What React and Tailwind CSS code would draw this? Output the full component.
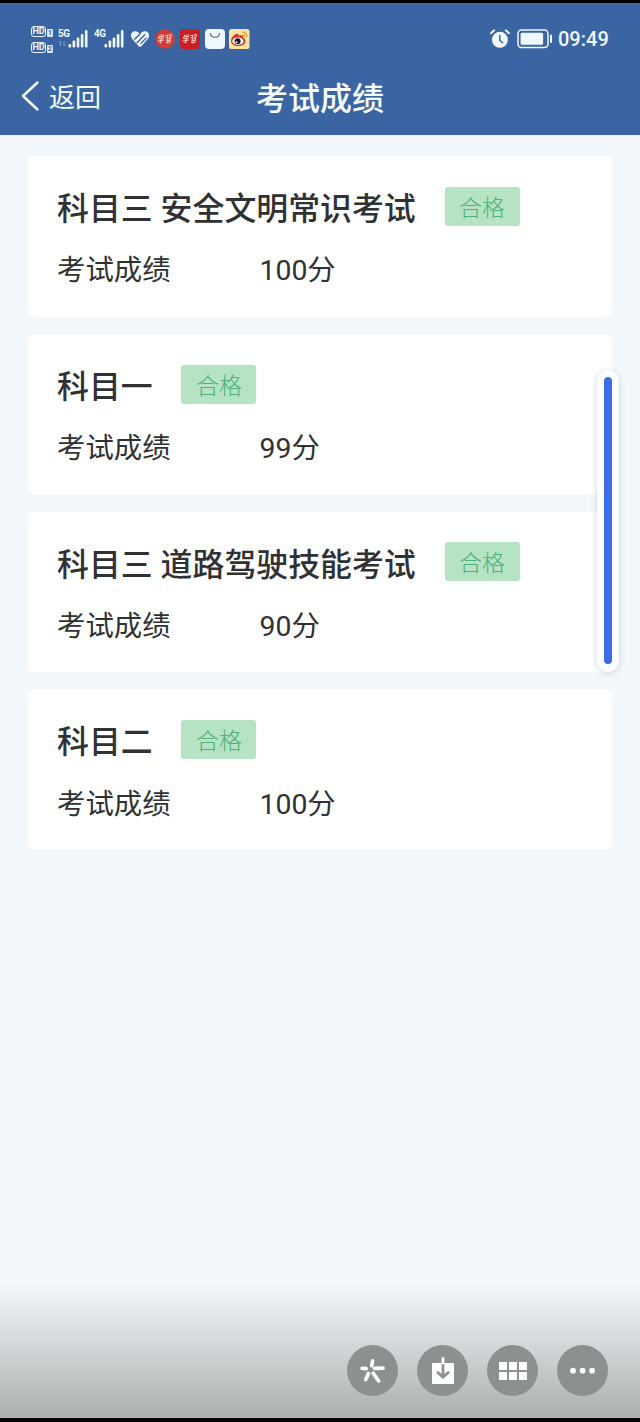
import React from "react";

const results = [
  { subject: "科目三 安全文明常识考试", score: "100分" },
  { subject: "科目一", score: "99分" },
  { subject: "科目三 道路驾驶技能考试", score: "90分" },
  { subject: "科目二", score: "100分" },
];

function HdIcon({ n }) {
  return (
    <div className="flex h-[12px] items-end gap-[1px]">
      <div className="flex h-[11px] w-[15px] shrink-0 items-center justify-center rounded-[3px] border border-[#e9f4ff] text-[9px] font-bold leading-none text-[#f0f8ff]">
        HD
      </div>
      <div className="flex h-[8px] w-[6px] shrink-0 items-center justify-center rounded-[1px] bg-[#dceaff] text-[7px] font-bold leading-none text-[#3b65a2]">
        {n}
      </div>
    </div>
  );
}

function Signal({ label, data }) {
  return (
    <div className="relative h-[20px] w-[31px]">
      <span className="absolute left-0 top-0 origin-left scale-x-90 text-[11px] font-bold leading-[10px] tracking-[-0.5px]">{label}</span>
      <svg className="absolute inset-0" width="31" height="20" fill="#f0f8ff">
        {data && <path d="M2.500 12v5M1 13.500l1.500-1.500M6 12v5M7.500 15.500L6 17" stroke="#7d9fd2" fill="none" />}
        <rect x="10.500" y="15" width="2.600" height="3.500" rx="1" />
        <rect x="14.600" y="11.500" width="2.600" height="7" rx="1" />
        <rect x="18.700" y="8.500" width="2.600" height="10" rx="1" />
        <rect x="22.800" y="5" width="2.600" height="13.500" rx="1" />
        <rect x="26.900" y="1" width="2.600" height="17.500" rx="1" />
      </svg>
    </div>
  );
}

function StudyIcon({ round }) {
  return (
    <svg width="20" height="20" viewBox="0 0 20 20">
      {round ? <circle cx="10" cy="10" r="9.800" fill="#cf3d36" /> : <rect width="20" height="20" rx="4" fill="#c91f20" />}
      <g fill="none" stroke="#ffe0dc" strokeWidth="0.900" strokeLinecap="round" strokeLinejoin="round">
        <path d="M4.200 6.500l.7 1.200M6 5.700v1.600M8.600 5.500L7.500 7.200M3.300 9.400l.4-1.300 5-.8-.6 1.200M4.500 9.800l3-.6-1.600 1.600v3.200l-1.100-.5M3 12l5.600-1" />
        <path d="M10.700 6.600l2.200-.4-.6 3-1.400-.5M14 6l2.500-.5-.8 3-1.500-.5M12.700 10l2.800-.5-.8 4-2.500.4zM12.500 11.800l2.300-.3" />
      </g>
    </svg>
  );
}

function StatusBar() {
  return (
    <div className="flex h-[57px] pt-[19px] font-['Roboto','Noto_Sans_CJK_SC',sans-serif] text-[#f0f8ff]">
      <div className="ml-[31px] flex w-[27px] flex-col gap-[4px] pt-[3px]">
        <HdIcon n="1" />
        <HdIcon n="2" />
      </div>
      <div className="flex pt-[7px]">
        <Signal label="5G" data />
        <div className="w-[5px]" />
        <Signal label="4G" />
      </div>
      <div className="ml-[5px] flex gap-[5px] pt-[7px]">
        <svg width="20" height="20" viewBox="0 0 20 20" fill="none" strokeLinecap="round">
          <path d="M10 5.300C7.800 1.700 3.700 1.500 1.700 4.100c-1.500 2.200-.7 4.600 1 6.300l6 6.800q1.300 1.300 2.600 0l6-6.800c1.700-1.700 2.500-4.100 1-6.300-2-2.600-6.100-2.400-8.300 1.200z" fill="#f0f8ff" />
          <path d="M9.900 5L4.600 10.300M14.800 5.700L7 13.800" stroke="#3b65a2" strokeWidth="1.400" />
          <path d="M16.200 9L11 14.300" stroke="#3b65a2" strokeWidth="1.200" />
        </svg>
        <StudyIcon round />
        <StudyIcon />
        <svg width="20" height="20" viewBox="0 0 20 20">
          <rect width="20" height="20" rx="4" fill="#f0f8ff" />
          <path d="M5.500 4.500c.4 5 8.600 5 9 0" fill="none" stroke="#536783" strokeWidth="1.200" strokeLinecap="round" />
        </svg>
        <svg className="-ml-px" width="21" height="20" viewBox="0 0 21 20">
          <rect width="20.500" height="20" rx="2.500" fill="#f9e4a0" />
          <path d="M2 12c0-4 5-8 7.200-7 .8.400.5 1.700.5 1.700s4-1.400 4.300.5c.2 1-.5 1.500-.5 1.500s3 .7 3 3.200c0 3-3.700 5.200-7.300 5.200C5 17.100 2 15 2 12z" fill="#d5392f" />
          <ellipse cx="8.900" cy="12.200" rx="5.500" ry="3.700" fill="#fff" />
          <circle cx="8.600" cy="12.300" r="3" fill="#191919" />
          <circle cx="7.500" cy="13.200" r="1" fill="#fff" />
          <path d="M13.300 6q2-.4 2.100 2M13.500 3.200q4.500-.4 4.300 4.600" fill="none" stroke="#ec9d41" strokeWidth="1.200" strokeLinecap="round" />
        </svg>
      </div>
      <div className="ml-auto mr-[31px] flex pt-[7px]">
        <svg width="20" height="20" viewBox="0 0 20 20">
          <circle cx="9.900" cy="10.800" r="8" fill="#f0f8ff" />
          <path d="M1 4.200L4.200 1.300M15.800 1.300L19 4.200" stroke="#f0f8ff" strokeWidth="2" strokeLinecap="round" />
          <path d="M9.800 6.500v4.700l2.800 2.500" fill="none" stroke="#3b65a2" strokeWidth="1.500" strokeLinecap="round" />
        </svg>
        <svg className="ml-[7px]" width="36" height="20" viewBox="0 0 36 20">
          <rect x="1" y="1" width="30" height="17.500" rx="3.500" fill="none" stroke="#f0f8ff" strokeWidth="1.500" />
          <rect x="3.600" y="3.700" width="22.500" height="12" rx="1.500" fill="#f0f8ff" />
          <path d="M34 6.500v6.500" stroke="#f0f8ff" strokeWidth="2" strokeLinecap="round" />
        </svg>
        <span className="ml-[5px] w-[51px] whitespace-nowrap text-[20px] font-medium leading-[21px]">09:49</span>
      </div>
    </div>
  );
}

function Header() {
  return (
    <header className="h-[135px] border-t-[3px] border-black bg-[#3b65a2] text-[#f5fcff]">
      <StatusBar />
      <div className="grid h-[75px] grid-cols-3 items-center">
        <div className="flex items-center pb-[3px] pl-[20px]">
          <svg width="20" height="32" viewBox="0 0 20 32" fill="none" stroke="currentColor" strokeWidth="2.400" strokeLinecap="round" strokeLinejoin="round">
            <path d="M17.500 2.500L3 16l14.500 13.500" />
          </svg>
          <span className="ml-[9px] pt-[3px] text-[26px] leading-[36px]">返回</span>
        </div>
        <h1 className="pt-[3px] text-center text-[32px] font-medium leading-[40px]">考试成绩</h1>
      </div>
    </header>
  );
}

function ResultCard({ subject, score }) {
  return (
    <section className="h-[160.600px] rounded-[6px] bg-white pl-[29px] pt-[30.400px] text-[#303133]">
      <div className="flex h-[40px] items-center">
        <h2 className="whitespace-nowrap pt-[5.400px] text-[31.900px] font-medium leading-[44px]">{subject}</h2>
        <span className="ml-[28.800px] flex h-[39px] w-[75px] items-center justify-center rounded-[3px] bg-[#b5e3c3] pt-[4px] text-[23px] font-light leading-none text-[#50b17c]">
          合格
        </span>
      </div>
      <div className="mt-[24.800px] flex h-[40px] items-center text-[28.400px] leading-[40px]">
        <span className="w-[202.500px]">考试成绩</span>
        <span>{score}</span>
      </div>
    </section>
  );
}

function ToolButton({ children }) {
  return (
    <button className="flex size-[51px] items-center justify-center rounded-full bg-[#8e908f]">
      <svg width="51" height="51" viewBox="0 0 51 51" fill="#fff">
        {children}
      </svg>
    </button>
  );
}

function Toolbar() {
  return (
    <footer className="flex h-[142px] justify-end gap-[19px] border-b-4 border-black bg-linear-to-b from-[#f5f9fa] via-[#d1d5d5] to-[#abafad] pr-[32px] pt-[65px]">
      <ToolButton>
        <g fill="none" stroke="#fff" strokeLinecap="round">
          <path d="M25.600 15.700L24.700 20.700" strokeWidth="3.600" />
          <path d="M15 23.200L19.200 23.600" strokeWidth="3.600" />
          <path d="M27.500 23.300L36 23.200" strokeWidth="3.700" />
          <path d="M21.400 28.500L18.700 34.500" strokeWidth="3.700" />
          <path d="M26.200 28.200L31.700 36" strokeWidth="3.700" />
        </g>
      </ToolButton>
      <ToolButton>
        <rect x="15" y="18" width="22" height="21" rx="1" />
        <path d="M26 18v14M20.800 27.500l5.200 4.700 5.200-4.700" fill="none" stroke="#8e908f" strokeWidth="2.800" strokeLinecap="round" strokeLinejoin="round" />
        <path d="M26 13.500V18" stroke="#fff" strokeWidth="2.800" strokeLinecap="round" />
      </ToolButton>
      <ToolButton>
        {[12, 22, 32].map((x) => (
          <g key={x}>
            <rect x={x} y="17" width="8" height="8" />
            <rect x={x} y="27" width="8" height="8" />
          </g>
        ))}
      </ToolButton>
      <ToolButton>
        <circle cx="16" cy="25.700" r="2.900" />
        <circle cx="25.600" cy="25.700" r="2.900" />
        <circle cx="35.100" cy="25.700" r="2.900" />
      </ToolButton>
    </footer>
  );
}

export default function App() {
  return (
    <div className="relative flex h-[1422px] w-[640px] flex-col overflow-hidden bg-[#f4f8fa] font-['Roboto','Noto_Sans_CJK_SC',sans-serif]">
      <Header />
      <main className="flex flex-1 flex-col gap-[17.200px] px-[28px] pt-[21px]">
        {results.map((r) => (
          <ResultCard key={r.subject} {...r} />
        ))}
      </main>
      <Toolbar />
      <div className="absolute left-[597px] top-[370px] flex h-[302px] w-[22px] justify-center rounded-full bg-[#fcfdff] pb-[8px] pt-[7px] shadow-[0_1px_6px_rgba(60,75,85,0.22)]">
        <div className="w-[8px] rounded-full bg-[#3d6ce7]" />
      </div>
    </div>
  );
}
